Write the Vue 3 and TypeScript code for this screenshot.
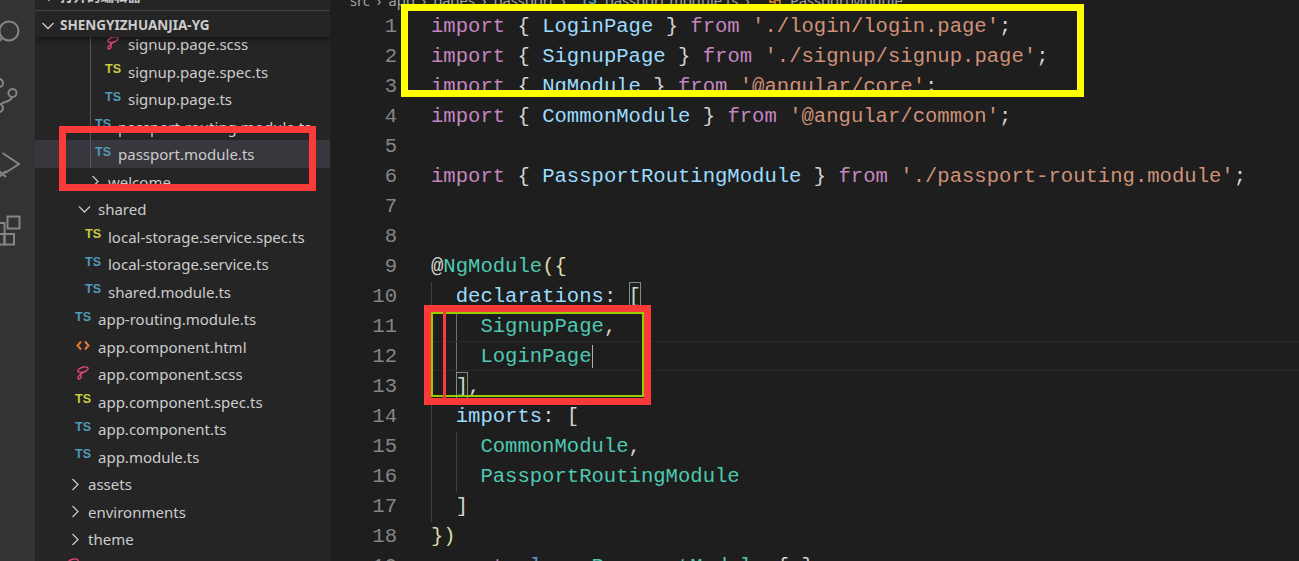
<script setup lang="ts">
type Icon = 'ts' | 'tsy' | 'sass' | 'html' | 'open' | 'closed'
interface Row { name: string; x: number; icon: Icon; guide?: boolean; active?: boolean }
interface Tok { t: string; c: string }
interface Line { indent: number; active?: boolean; current?: boolean; toks: Tok[] }

const rows: Row[] = [
  { name: 'signup.page.scss', x: 128, icon: 'sass', guide: true },
  { name: 'signup.page.spec.ts', x: 128, icon: 'tsy', guide: true },
  { name: 'signup.page.ts', x: 128, icon: 'ts', guide: true },
  { name: 'passport-routing.module.ts', x: 118, icon: 'ts', guide: true },
  { name: 'passport.module.ts', x: 118, icon: 'ts', guide: true, active: true },
  { name: 'welcome', x: 108, icon: 'closed' },
  { name: 'shared', x: 98, icon: 'open' },
  { name: 'local-storage.service.spec.ts', x: 108, icon: 'tsy' },
  { name: 'local-storage.service.ts', x: 108, icon: 'ts' },
  { name: 'shared.module.ts', x: 108, icon: 'ts' },
  { name: 'app-routing.module.ts', x: 98, icon: 'ts' },
  { name: 'app.component.html', x: 98, icon: 'html' },
  { name: 'app.component.scss', x: 98, icon: 'sass' },
  { name: 'app.component.spec.ts', x: 98, icon: 'tsy' },
  { name: 'app.component.ts', x: 98, icon: 'ts' },
  { name: 'app.module.ts', x: 98, icon: 'ts' },
  { name: 'assets', x: 88, icon: 'closed' },
  { name: 'environments', x: 88, icon: 'closed' },
  { name: 'theme', x: 88, icon: 'closed' },
  { name: 'global.scss', x: 88, icon: 'sass' },
]

const imp = (name: string, path: string): Tok[] => [
  { t: 'import', c: 'kw' }, { t: ' { ', c: 'pl' }, { t: name, c: 'id' }, { t: ' } ', c: 'pl' },
  { t: 'from', c: 'kw' }, { t: ' ', c: 'pl' }, { t: `'${path}'`, c: 'st' }, { t: ';', c: 'pl' },
]

const lines: Line[] = [
  { indent: 0, toks: imp('LoginPage', './login/login.page') },
  { indent: 0, toks: imp('SignupPage', './signup/signup.page') },
  { indent: 0, toks: imp('NgModule', '@angular/core') },
  { indent: 0, toks: imp('CommonModule', '@angular/common') },
  { indent: 0, toks: [] },
  { indent: 0, toks: imp('PassportRoutingModule', './passport-routing.module') },
  { indent: 0, toks: [] },
  { indent: 0, toks: [] },
  { indent: 0, toks: [{ t: '@', c: 'pl' }, { t: 'NgModule', c: 'ty' }, { t: '({', c: 'br' }] },
  { indent: 1, toks: [{ t: 'declarations', c: 'id' }, { t: ': ', c: 'pl' }, { t: '[', c: 'box' }] },
  { indent: 2, active: true, toks: [{ t: 'SignupPage', c: 'ty' }, { t: ',', c: 'pl' }] },
  { indent: 2, active: true, current: true, toks: [{ t: 'LoginPage', c: 'ty cursor' }] },
  { indent: 1, toks: [{ t: ']', c: 'box' }, { t: ',', c: 'pl' }] },
  { indent: 1, toks: [{ t: 'imports', c: 'id' }, { t: ': ', c: 'pl' }, { t: '[', c: 'pl' }] },
  { indent: 2, toks: [{ t: 'CommonModule', c: 'ty' }, { t: ',', c: 'pl' }] },
  { indent: 2, toks: [{ t: 'PassportRoutingModule', c: 'ty' }] },
  { indent: 1, toks: [{ t: ']', c: 'pl' }] },
  { indent: 0, toks: [{ t: '})', c: 'br' }] },
  { indent: 0, toks: [{ t: 'export', c: 'kw' }, { t: ' ', c: 'pl' }, { t: 'class', c: 'key' }, { t: ' ', c: 'pl' }, { t: 'PassportModule', c: 'ty' }, { t: ' { }', c: 'pl' }] },
]
</script>

<template>
  <div class="window">
    <nav class="activity">
      <svg class="act" viewBox="0 0 35 66" fill="none" stroke="#858585" stroke-width="2">
        <circle cx="9" cy="33" r="9.5" />
        <path d="M2 40 L-3 46" />
      </svg>
      <svg class="act" viewBox="0 0 35 66" fill="none" stroke="#858585" stroke-width="2">
        <circle cx="12.5" cy="28" r="4" />
        <circle cx="-1" cy="18" r="4" />
        <circle cx="-1" cy="43" r="4" />
        <path d="M12 32 C11 37 5 36 1 39" />
      </svg>
      <svg class="act" viewBox="0 0 35 66" fill="none" stroke="#858585" stroke-width="2">
        <path d="M2.5 22 L19 33 L5 42" />
        <path d="M-1 40 L6 46 M-1 46 L6 40" />
      </svg>
      <svg class="act" viewBox="0 0 35 66" fill="none" stroke="#858585" stroke-width="2">
        <rect x="7.5" y="18.5" width="12" height="12" />
        <rect x="4.5" y="36" width="9.5" height="10.5" />
        <rect x="-6" y="36" width="10.5" height="10.5" />
        <rect x="-6" y="25" width="10.5" height="11" />
      </svg>
    </nav>

    <aside class="side">
      <div class="section">
        <svg class="chev" viewBox="0 0 12 12" fill="none" stroke="#cccccc" stroke-width="1.3"><path d="M4 1.5 L8.5 6 L4 10.5" /></svg>
        <span>打开的编辑器</span>
      </div>
      <div class="folder">
        <svg class="chev down" viewBox="0 0 12 12" fill="none" stroke="#cccccc" stroke-width="1.3"><path d="M0.5 3 L6 8.5 L11.5 3" /></svg>
        <span>SHENGYIZHUANJIA-YG</span>
      </div>
      <div class="tree">
        <div
          v-for="r in rows"
          :key="r.name"
          class="row"
          :class="{ guided: r.guide, active: r.active }"
          :style="{ paddingLeft: r.x - 35 + 'px' }"
        >
          <span class="ico">
            <span v-if="r.icon === 'ts'" class="ts">TS</span>
            <span v-else-if="r.icon === 'tsy'" class="ts yellow">TS</span>
            <svg v-else-if="r.icon === 'sass'" width="13" height="14" viewBox="0 0 13 14" fill="none" stroke="#e8457a" stroke-width="1.4">
              <path d="M12 1.8 C9.5 0 3.5 1.2 2 4.2 C1 6.8 6 6.8 8 6 C10.5 5 12.8 3 12 1.8 M7.5 6.5 C5 7.8 2 9.8 2 12 C2 13.6 4.5 13.2 5 11.2 C5.4 9.6 5 8.5 4 7.5" />
            </svg>
            <svg v-else-if="r.icon === 'html'" width="14" height="11" viewBox="0 0 14 11" fill="none" stroke="#e37933" stroke-width="2">
              <path d="M5 1.5 L1.5 5.5 L5 9.5 M9 1.5 L12.5 5.5 L9 9.5" />
            </svg>
            <svg v-else-if="r.icon === 'closed'" class="tw" width="9" height="13" viewBox="0 0 9 13" fill="none" stroke="#c5c5c5" stroke-width="1.3">
              <path d="M1.5 1 L7 6.5 L1.5 12" />
            </svg>
            <svg v-else class="tw open" width="13" height="9" viewBox="0 0 13 9" fill="none" stroke="#c5c5c5" stroke-width="1.3">
              <path d="M1 1.5 L6.5 7 L12 1.5" />
            </svg>
          </span>
          <span class="name">{{ r.name }}</span>
        </div>
      </div>
    </aside>

    <main class="editor">
      <div class="crumbs">
        <span>src</span><i>›</i><span>app</span><i>›</i><span>pages</span><i>›</i><span>passport</span><i>›</i>
        <span class="ts crumb-ts">TS</span><span>passport.module.ts</span><i>›</i>
        <svg class="crumb-sym" width="12" height="12" viewBox="0 0 12 12" fill="none" stroke="#ee9d28" stroke-width="1.3"><path d="M1 1 H8 V5 M1 1 V8 H5 M6 6 H11 V11 H6 Z" /></svg>
        <span>PassportModule</span>
      </div>
      <div class="code">
        <div v-for="(l, i) in lines" :key="i" class="line" :class="{ current: l.current }">
          <span class="num">{{ i + 1 }}</span>
          <span class="src">
            <span v-for="n in l.indent" :key="n" class="indent" :class="{ lit: l.active && n === 2 }"></span>
            <span v-for="(k, j) in l.toks" :key="j" :class="k.c">{{ k.t }}</span>
          </span>
        </div>
      </div>
    </main>

    <div class="mark yellow-box"></div>
    <div class="mark red-side"></div>
    <div class="mark red-code"></div>
    <div class="mark green-code"></div>
    <div class="mark red-bar"></div>
  </div>
</template>

<style>
html, body { margin: 0; background: #1e1e1e; overflow: hidden; }
</style>

<style scoped>
.window {
  position: relative;
  display: flex;
  width: 1299px;
  height: 561px;
  overflow: hidden;
  background: #1e1e1e;
}
.activity {
  flex: 0 0 35px;
  display: flex;
  flex-direction: column;
  gap: 0.67px;
  background: #333333;
  overflow: hidden;
}
.act {
  flex: 0 0 66px;
  width: 35px;
  height: 66px;
  overflow: visible;
}
.activity .act:first-child { margin-top: -2px; }

.side {
  flex: 0 0 295px;
  display: flex;
  flex-direction: column;
  background: #252526;
  color: #cccccc;
  font-family: "Noto Sans", "Noto Sans CJK SC", sans-serif;
  overflow: hidden;
}
.section {
  flex: 0 0 22px;
  min-height: 0;
  box-sizing: border-box;
  margin-top: -11px;
  display: flex;
  align-items: center;
  padding: 0 0 8px 8px;
  gap: 5px;
  font-size: 13.5px;
  line-height: 1;
  font-weight: 700;
  border-bottom: 1px solid #444444;
  font-family: "Noto Sans CJK SC", sans-serif;
}
.chev { width: 12px; height: 12px; flex: none; }
.section .chev { transform: rotate(-20deg); }
.folder {
  flex: 0 0 26px;
  min-height: 0;
  box-sizing: border-box;
  display: flex;
  align-items: center;
  padding: 4px 0 0 7px;
  gap: 6px;
  font-size: 13.5px;
  line-height: 1;
  font-weight: 700;
  box-shadow: 0 3px 5px #00000066;
  position: relative;
  z-index: 1;
}
.tree {
  flex: 1;
  overflow: hidden;
}
.row {
  position: relative;
  display: flex;
  align-items: center;
  height: 27.5px;
  font-size: 15px;
  white-space: nowrap;
}
.row:first-child { margin-top: -6.75px; }
.row.active { background: #37373d; }
.guided::before {
  content: "";
  position: absolute;
  left: 55px;
  top: 0;
  bottom: 0;
  width: 1px;
  background: #585858;
}
.ico {
  position: absolute;
  display: flex;
  align-items: center;
  height: 100%;
  transform: translateX(-23px);
}
.ts {
  font-family: "Liberation Sans", sans-serif;
  font-weight: 700;
  font-size: 12.5px;
  color: #519aba;
  line-height: 1;
  margin-top: -4px;
}
.ts.yellow { color: #cbcb41; }
.ico svg { margin-left: 1px; margin-top: -3px; }
.ico .tw { margin-left: 6px; margin-top: 0; }
.ico .tw.open { margin-left: 3px; }

.editor {
  flex: 1;
  min-width: 0;
  display: flex;
  flex-direction: column;
  overflow: hidden;
}
.crumbs {
  flex: 0 0 22px;
  box-sizing: border-box;
  margin-top: -11px;
  padding-left: 20px;
  display: flex;
  align-items: center;
  gap: 4px;
  font-family: "Noto Sans", sans-serif;
  font-size: 14.7px;
  color: #a0a0a0;
  white-space: nowrap;
}
.crumbs i { font-style: normal; padding: 0 3px; }
.crumb-ts { margin: 0 4px 0 8px; }
.crumb-sym { margin: 0 5px 0 12px; }
.code {
  font-family: "Liberation Mono", monospace;
  font-size: 20.58px;
  line-height: 30px;
  white-space: pre;
}
.line {
  display: flex;
  height: 30px;
  box-sizing: border-box;
}
.num, .src { position: relative; top: 1px; }
.line.current { position: relative; }
.line.current::after {
  content: "";
  position: absolute;
  left: 101px;
  right: 0;
  top: 0;
  bottom: 0;
  border-top: 1px solid #2a2a2a;
  border-bottom: 1px solid #2a2a2a;
  pointer-events: none;
}
.num {
  flex: 0 0 67px;
  text-align: right;
  color: #858585;
}
.src {
  margin-left: 34px;
  display: block;
}
.indent {
  display: inline-block;
  width: 24.7px;
  height: 30px;
  vertical-align: top;
  box-shadow: inset 1px 0 0 #404040;
}
.indent.lit { box-shadow: inset 1px 0 0 #707070; }
.kw { color: #c586c0; }
.key { color: #569cd6; }
.id { color: #9cdcfe; }
.ty { color: #4ec9b0; }
.st { color: #ce9178; }
.pl { color: #d4d4d4; }
.br { color: #dcdcaa; }
.box {
  display: inline-block;
  height: 30px;
  box-sizing: border-box;
  vertical-align: top;
  color: #d4d4d4;
  background: #0064001a;
  outline: 1px solid #888888;
  outline-offset: -1px;
}
.cursor { box-shadow: 1px 0 0 #aeafad; }

.mark { position: absolute; box-sizing: border-box; pointer-events: none; }
.yellow-box { left: 401px; top: 4px; width: 683px; height: 93px; border: 7px solid #ffff00; }
.red-side { left: 59px; top: 126px; width: 257px; height: 65px; border: 7px solid #fc3a3a; }
.red-code { left: 424px; top: 305px; width: 227px; height: 100px; border: 7px solid #fc3a3a; }
.green-code { left: 431px; top: 312px; width: 213px; height: 85px; border: 2px solid #9acd00; }
.red-bar { left: 443px; top: 312px; width: 3px; height: 86px; background: #fc3a3a; }
</style>
